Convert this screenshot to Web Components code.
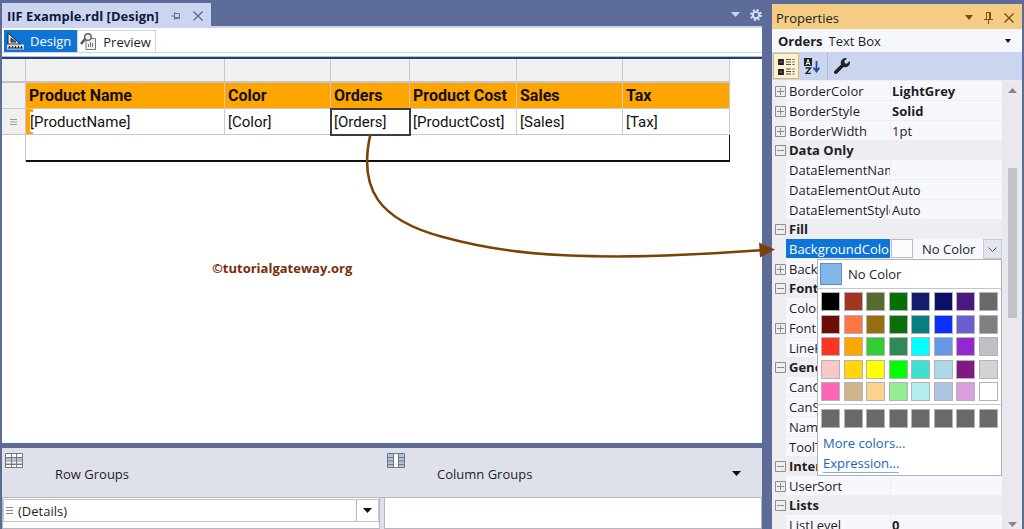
<!DOCTYPE html>
<html lang="en">
<head>
<meta charset="utf-8">
<title>IIF Example.rdl [Design]</title>
<style>
    body {
        margin: 0;
        background: #5d6b99;
        color: #1e1e1e;
        font: 13px/20px "Open Sans", "Noto Sans", sans-serif;
    }
</style>
</head>
<body>
<report-designer></report-designer>

<script>
/* Shared base: every element clones its own template into an open shadow root */
class BaseElement extends HTMLElement {
    constructor() {
        super();
        this.attachShadow({ mode: "open" });
    }

    reset() {
        return `
            * { box-sizing: border-box; }
            button, select { font: inherit; color: inherit; margin: 0; padding: 0; border: 0; background: none; }
            svg { display: block; flex: none; }
        `;
    }

    connectedCallback() {
        const template = document.createElement("template");
        template.innerHTML = `<style>${this.reset()}${this.getStyles()}</style>${this.getTemplate()}`;
        this.shadowRoot.appendChild(template.content.cloneNode(true));
    }
}

/* Document tab with its pin and close buttons */
class DocumentTabs extends BaseElement {
    getStyles() {
        return `
            :host { display: flex; justify-content: space-between; height: 26px; padding-top: 3px; }
            .tab { display: flex; align-items: center; gap: 12px; padding: 2px 8px 0 5px; background: #ccd5f0; color: #10183c; font-weight: 700; }
            .tools { display: flex; align-items: center; gap: 10px; }
        `;
    }

    getTemplate() {
        return `
            <div class="tab">
                <span>IIF Example.rdl [Design]</span>
                <button aria-label="Pin tab"><svg width="10" height="10" fill="none" stroke="#66749f"><path d="M0 5h3M3.500 1v8M3.500 2.500h5v5h-5M3.500 6.500h5"/></svg></button>
                <button aria-label="Close tab"><svg width="10" height="10" fill="none" stroke="#5a6894" stroke-width="1.300"><path d="M0.500 0.500l9 9M9.500 0.500l-9 9"/></svg></button>
            </div>
            <div class="tools">
                <button aria-label="Window list"><svg width="9" height="6" fill="#ccd5f0"><path d="M0 0h9L4.500 5z"/></svg></button>
                <button aria-label="Settings"><svg width="12" height="12" viewBox="0 0 12 12" fill="none" stroke="#d6def5"><circle cx="6" cy="6" r="3.200" stroke-width="2"/><circle cx="6" cy="6" r="5" stroke-width="2" stroke-dasharray="2 1.930"/></svg></button>
            </div>
        `;
    }
}

/* Design / Preview switch */
class ViewSwitch extends BaseElement {
    getStyles() {
        return `
            :host { display: flex; height: 27px; padding: 2px 2px 0; border-top: 2px solid #ccd5f0; border-bottom: 1px solid #ccd5f0; background: #fff; }
            button { display: flex; align-items: center; gap: 6px; height: 22px; padding: 0 6px 0 3px; }
            .active { background: #0f74d8; color: #fff; }
            .other { border: 1px solid #ccd5f0; border-bottom: 0; padding: 0 4px 0 2px; }
        `;
    }

    getTemplate() {
        return `
            <button class="active">
                <svg width="17" height="17" viewBox="0 0 17 17"><path d="M1 0v11h12z" fill="#e9e9e4" stroke="#222"/><path d="M4 5v4h5z" fill="#0f74d8" stroke="#333"/><path d="M0 11.500h17v5H0z" fill="#ddd9cc"/><path d="M1 15h15M2.500 13v2M5.500 13v2M8.500 13v2M11.500 13v2M14.500 13v2" stroke="#222"/></svg>
                <span>Design</span>
            </button>
            <button class="other">
                <svg width="17" height="17" viewBox="0 0 17 17" fill="none"><path d="M6 5.500h9.500v11H6z" fill="#f4f4f4" stroke="#777"/><path d="M8.500 14v-3M10.500 14V9M12.500 14v-4" stroke="#777"/><circle cx="8" cy="4" r="3.300" fill="#f4f4f4" stroke="#666" stroke-width="1.500"/><path d="M5 6L1 11" stroke="#555" stroke-width="2.500"/></svg>
                <span>Preview</span>
            </button>
        `;
    }
}

/* The table region being designed, with its row and column handles */
class ReportTablix extends BaseElement {
    getStyles() {
        return `
            :host { display: block; flex: 1; min-height: 0; overflow: hidden; background: #fff; padding-top: 3px; }
            .edge { border-top: 1px solid #b9bcc4; border-bottom: 2px solid #1c3f7d; }
            table { table-layout: fixed; width: 728px; border-collapse: separate; border-spacing: 0; color: #111; font: 15px/20px Roboto, sans-serif; }
            th, td { height: 26px; padding: 0 0 0 3px; border-right: 1px solid #c9c9c9; border-bottom: 1px solid #c9c9c9; text-align: left; white-space: nowrap; }
            .handles td { height: 24px; background: #f0f0f0; border-bottom: 2px solid #c3c3c8; }
            .handle { background: #f0f0f0; padding: 0; }
            .handle svg { margin: 0 auto; }
            th { background: #ffa500; font-size: 16px; font-weight: 700; }
            .first { padding: 0; background: linear-gradient(90deg, #ffa500 7px, #fff 7px); }
            .first span { display: inline-block; margin-left: 4px; background: #fff; }
            .selected { outline: 2px solid #3c3c3c; outline-offset: -1px; }
            .body td { height: 27px; border-right-color: #111; border-bottom: 2px solid #111; }
            .body .outside { border-right-color: #c9c9c9; border-bottom: 0; }
        `;
    }

    getTemplate() {
        return `
            <div class="edge"></div>
            <table>
                <colgroup><col width="24"><col width="199"><col width="106"><col width="79"><col width="107"><col width="106"><col width="107"></colgroup>
                <tr class="handles"><td></td><td></td><td></td><td></td><td></td><td></td><td></td></tr>
                <tr>
                    <td class="handle"></td>
                    <th>Product Name</th><th>Color</th><th>Orders</th><th>Product Cost</th><th>Sales</th><th>Tax</th>
                </tr>
                <tr>
                    <td class="handle"><svg width="7" height="6" stroke="#999"><path d="M0 0.500h7M0 3h7M0 5.500h7"/></svg></td>
                    <td class="first"><span>[ProductName]</span></td><td>[Color]</td><td class="selected">[Orders]</td><td>[ProductCost]</td><td>[Sales]</td><td>[Tax]</td>
                </tr>
                <tr class="body"><td class="outside"></td><td colspan="6"></td></tr>
            </table>
        `;
    }
}

/* Row Groups and Column Groups */
class GroupingPane extends BaseElement {
    getStyles() {
        return `
            :host { display: block; height: 81px; background: #dee1e9; }
            .columns { display: grid; grid-template-columns: 1fr 1fr; column-gap: 4px; }
            .head { height: 50px; border-bottom: 1px solid #b5b8c0; }
            .title { display: flex; align-items: flex-start; gap: 32px; padding: 5px 21px 0 3px; }
            .title span { flex: 1; padding-top: 11px; }
            .title button { padding-top: 18px; }
            .list { height: 31px; padding-top: 1px; background: #fff; border: 1px solid #b5b8c0; border-top: 0; }
            .group { display: flex; align-items: center; gap: 5px; height: 23px; padding-left: 2px; border: 1px solid #c3c6ce; }
            .group span { flex: 1; }
            .group button { align-self: stretch; display: grid; place-items: center; width: 22px; border-left: 1px solid #b5b8c0; }
        `;
    }

    getTemplate() {
        const caret = `<svg width="9" height="5"><path d="M0 0h9L4.500 5z" fill="#111"/></svg>`;
        return `
            <div class="columns head">
                <div class="title">
                    <svg width="18" height="15"><path d="M0.500 0.500h17v14h-17z" fill="#fff" stroke="#777"/><path d="M1 5h16v2H1zM1 10h16v2H1z" fill="#a9c4ea"/><path d="M6.500 0v15M11.500 0v15M0 4.500h18M0 8h18M0 11.500h18" stroke="#777"/></svg>
                    <span>Row Groups</span>
                </div>
                <div class="title">
                    <svg width="18" height="15"><path d="M0.500 0.500h17v14h-17z" fill="#a9c4ea" stroke="#777"/><path d="M0 4.500h18M0 8h18M0 11.500h18" stroke="#777"/><path d="M6.500 1h5v13h-5z" fill="#fff"/><path d="M6.500 0v15M11.500 0v15" stroke="#777"/></svg>
                    <span>Column Groups</span>
                    <button aria-label="Grouping options">${caret}</button>
                </div>
            </div>
            <div class="columns">
                <div class="list">
                    <div class="group">
                        <svg width="7" height="7" stroke="#888"><path d="M0 0.500h7M0 3.500h7M0 6.500h7"/></svg>
                        <span>(Details)</span>
                        <button aria-label="Details group menu">${caret}</button>
                    </div>
                </div>
                <div class="list"></div>
            </div>
        `;
    }
}

/* One line of the grid: name, value in the slot, optional expander, category style */
class PropertyRow extends BaseElement {
    getStyles() {
        return `
            :host { display: grid; grid-template-columns: 14px 104px minmax(0, 1fr); position: relative; height: 20px; line-height: 20px; }
            :host([category]) { height: 19px; line-height: 19px; font-weight: 700; }
            :host([strong]) .value { font-weight: 700; }
            button { display: grid; place-items: center start; padding-left: 3px; }
            .name, .value { overflow: hidden; white-space: nowrap; background: #f7f8fe; border-bottom: 1px solid #eeeef4; }
            .name { padding-left: 3px; }
            .value { padding-left: 1px; border-left: 1px solid #eeeef4; }
            :host([category]) .name, :host([category]) .value { background: none; border: 0; }
            :host([selected]) .name { background: #0f74d8; color: #fff; }
            :host([selected]) .value { padding: 0; border-bottom: 0; }
        `;
    }

    getTemplate() {
        const sign = this.getAttribute("sign");
        const icon = sign ? `
            <button aria-label="Toggle ${this.getAttribute("name")}">
                <svg width="11" height="11" fill="none" stroke="#8c8c92"><path d="M0.500 0.500h10v10h-10zM2 5.500h7${sign === "plus" ? "M5.500 2v7" : ""}"/></svg>
            </button>` : "<span></span>";
        return `
            ${icon}
            <div class="name">${this.getAttribute("name")}</div>
            <div class="value"><slot></slot></div>
            <slot name="popup"></slot>
        `;
    }
}

/* Swatch box, chosen colour and drop-down arrow */
class ColorField extends BaseElement {
    getStyles() {
        return `
            :host { display: flex; position: relative; height: 20px; }
            .swatch { width: 22px; height: 19px; border: 1px solid #b9bcc4; background: #fbfbfe; }
            select { flex: 1; appearance: none; padding-left: 9px; line-height: 20px; }
            .arrow { display: grid; place-items: center; width: 19px; background: #e3e5ec; border: 1px solid #c9ccd4; }
        `;
    }

    getTemplate() {
        return `
            <span class="swatch"></span>
            <select aria-label="BackgroundColor"><option>No Color</option></select>
            <span class="arrow"><svg width="9" height="5" fill="none" stroke="#555"><path d="M0.500 0.500l4 4 4-4"/></svg></span>
        `;
    }
}

/* Palette that drops down from the colour field */
class ColorPalette extends BaseElement {
    getStyles() {
        return `
            :host { display: block; position: absolute; z-index: 1; top: 100%; right: 0; width: 185px; height: 217px; background: #fff; border: 1px solid #b0b2b8; }
            .none { display: flex; align-items: center; gap: 6px; width: 100%; height: 29px; padding: 2px; border-bottom: 1px solid #c3c6ce; }
            .none i { width: 22px; height: 22px; background: #82b7e8; border: 1px solid #5a8fc8; }
            .grid { display: grid; grid-template-columns: repeat(8, 19px); justify-content: space-between; align-content: space-between; height: 115px; padding: 3px; }
            .grid button { height: 19px; border: 1px solid #b4b4b8; }
            .custom { height: 28px; border-top: 1px solid #c3c6ce; align-content: center; }
            .links { padding: 1px 5px; }
            a { display: block; color: #1a65b8; text-decoration: none; line-height: 20px; }
            a span { border-bottom: 1px solid #88aedb; display: inline-block; line-height: 17px; }
        `;
    }

    getTemplate() {
        const colors = `000000 a03820 556b2f 067006 141c70 0a1068 4b1880 696969
            6e0c08 ff7645 996e0e 0a700a 087e7e 0a32ff 6a60cc 808080
            ff3524 ffa500 32cd32 2e8b57 00ffff 6498e2 9328d0 c0c0c4
            f8c8c8 ffd60a ffff00 00ff00 3ee0d0 add8ea 801a80 d3d3d3
            ff65b4 d2b48c fdd48c 90ee90 b0eef0 b0c4e2 dc9edc ffffff`.split(/\s+/);
        const swatch = color => `<button aria-label="#${color}" style="background: #${color}"></button>`;
        return `
            <button class="none"><i></i><span>No Color</span></button>
            <div class="grid">${colors.map(swatch).join("")}</div>
            <div class="grid custom">${swatch("696969").repeat(8)}</div>
            <div class="links">
                <a href="#more">More colors...</a>
                <a href="#expression"><span>Expression...</span></a>
            </div>
        `;
    }
}

/* Properties tool window */
class PropertiesPanel extends BaseElement {
    getStyles() {
        return `
            :host { display: flex; flex-direction: column; min-height: 0; margin-top: 4px; background: #eeeef2; }
            .title { display: flex; align-items: center; gap: 11px; height: 25px; padding: 2px 8px 0 4px; background: #f5cc84; }
            .title span { flex: 1; }
            .object { display: flex; align-items: center; gap: 6px; height: 23px; padding: 0 11px 0 6px; background: #f5f7fd; text-align: left; }
            .object span { flex: 1; }
            .tools { display: flex; align-items: center; height: 28px; padding: 0 1px; background: #ccd5f0; }
            .tools button { display: grid; place-items: center; width: 26px; height: 26px; }
            .tools .on { background: #fdf1cd; border: 1px solid #d9b973; }
            .tools .wrench { margin-left: 2px; border-left: 1px dotted #9aa4c4; width: 28px; }
            .content { display: grid; grid-template-columns: minmax(0, 1fr) 20px; flex: 1; min-height: 0; padding-top: 1px; overflow: hidden; }
            .rows { min-height: 0; }
            .scroll { display: flex; flex-direction: column; align-items: center; justify-content: space-between; padding: 7px 0 2px; background: #e8e8ee; }
            .thumb { width: 9px; height: 150px; margin-bottom: 130px; background: #c2c3c9; }
        `;
    }

    getTemplate() {
        return `
            <div class="title">
                <span>Properties</span>
                <button aria-label="Window position"><svg width="8" height="5"><path d="M0 0h8L4 5z" fill="#7a4f08"/></svg></button>
                <button aria-label="Auto hide"><svg width="9" height="12" fill="none" stroke="#7a4f08"><path d="M2.500 7V0.500h4V7M5.500 0.500V7M0 7.500h9M4.500 8v4"/></svg></button>
                <button aria-label="Close"><svg width="10" height="10" fill="none" stroke="#7a4f08" stroke-width="1.400"><path d="M0.500 0.500l9 9M9.500 0.500l-9 9"/></svg></button>
            </div>
            <button class="object"><b>Orders</b><span>Text Box</span><svg width="6" height="4"><path d="M0 0h6L3 4z" fill="#111"/></svg></button>
            <div class="tools">
                <button class="on" aria-label="Categorized"><svg width="17" height="17" fill="none" stroke="#222"><path d="M1 2h4v4H1zM1 12h4v4H1z" stroke-width="1.800"/><path d="M3 2v4M1 4h4M3 12v4M1 14h4"/><path d="M8 1.500h5M8 4h5M8 6.500h5M8 11h5M8 13.500h5M8 16h5M14.500 1.500h2M14.500 4h2M14.500 6.500h2M14.500 11h2M14.500 13.500h2M14.500 16h2" stroke="#555"/></svg></button>
                <button aria-label="Alphabetical"><svg width="16" height="16" fill="none"><path d="M0 0h8v8H0z" fill="#222"/><path d="M2 7l2-5.500L6 7M3 5.500h2" stroke="#fff"/><path d="M1.500 10h5L2 15.500h5" stroke="#222" stroke-width="1.500"/><path d="M12.500 3v10M9.500 9.500l3 4 3-4" stroke="#1b4a9c" stroke-width="1.700"/></svg></button>
                <button class="wrench" aria-label="Property pages"><svg width="16" height="16" viewBox="0 0 16 16"><path d="M1.800 14.200L9.500 6.500" stroke="#222" stroke-width="3.600" stroke-linecap="round"/><path d="M13 0.400L10.300 3.100l0.500 2.100 2.100 0.500L15.600 3A4.600 4.600 0 1 1 13 0.400z" fill="#222"/></svg></button>
            </div>
            <div class="content">
                <div class="rows">
                    <property-row name="BorderColor" sign="plus" strong>LightGrey</property-row>
                    <property-row name="BorderStyle" sign="plus" strong>Solid</property-row>
                    <property-row name="BorderWidth" sign="plus">1pt</property-row>
                    <property-row name="Data Only" sign="minus" category></property-row>
                    <property-row name="DataElementNam"></property-row>
                    <property-row name="DataElementOut">Auto</property-row>
                    <property-row name="DataElementStyle">Auto</property-row>
                    <property-row name="Fill" sign="minus" category></property-row>
                    <property-row name="BackgroundColo" selected>
                        <color-field></color-field>
                        <color-palette slot="popup"></color-palette>
                    </property-row>
                    <property-row name="BackgroundImage" sign="plus"></property-row>
                    <property-row name="Font" sign="minus" category></property-row>
                    <property-row name="Color"></property-row>
                    <property-row name="Font" sign="plus"></property-row>
                    <property-row name="LineHeight"></property-row>
                    <property-row name="General" sign="minus" category></property-row>
                    <property-row name="CanGrow"></property-row>
                    <property-row name="CanShrink"></property-row>
                    <property-row name="Name"></property-row>
                    <property-row name="ToolTip"></property-row>
                    <property-row name="Interactivity" sign="minus" category></property-row>
                    <property-row name="UserSort" sign="plus"></property-row>
                    <property-row name="Lists" sign="minus" category></property-row>
                    <property-row name="ListLevel" strong>0</property-row>
                </div>
                <div class="scroll">
                    <svg width="9" height="5"><path d="M0 5h9L4.500 0z" fill="#85868c"/></svg>
                    <div class="thumb"></div>
                    <svg width="9" height="5"><path d="M0 0h9L4.500 5z" fill="#85868c"/></svg>
                </div>
            </div>
        `;
    }
}

/* Whole window, plus the annotation drawn over it */
class ReportDesigner extends BaseElement {
    getStyles() {
        return `
            :host { display: grid; grid-template-columns: minmax(0, 1fr) 250px; grid-template-rows: 100vh; column-gap: 10px; padding: 0 2px; position: relative; overflow: hidden; }
            main { display: flex; flex-direction: column; min-height: 0; }
            grouping-pane { margin-top: 5px; }
            .credit { position: absolute; left: 212px; top: 258px; color: #7a2d0a; font-weight: 700; }
            .arrow { position: absolute; left: 360px; top: 130px; z-index: 2; pointer-events: none; }
        `;
    }

    getTemplate() {
        return `
            <main>
                <document-tabs></document-tabs>
                <view-switch></view-switch>
                <report-tablix></report-tablix>
                <grouping-pane></grouping-pane>
            </main>
            <properties-panel></properties-panel>
            <span class="credit">©tutorialgateway.org</span>
            <svg class="arrow" width="420" height="135" fill="none"><path d="M10.500 4C-2 58 18 90 83 107C130 120 180 126.500 257 126.500C320 126 360 123 403 120" stroke="#7b4208" stroke-width="2.600"/><path d="M399 112.500L415 119.500L400 127.500z" fill="#7b4208"/></svg>
        `;
    }
}

customElements.define("document-tabs", DocumentTabs);
customElements.define("view-switch", ViewSwitch);
customElements.define("report-tablix", ReportTablix);
customElements.define("grouping-pane", GroupingPane);
customElements.define("property-row", PropertyRow);
customElements.define("color-field", ColorField);
customElements.define("color-palette", ColorPalette);
customElements.define("properties-panel", PropertiesPanel);
customElements.define("report-designer", ReportDesigner);
</script>
</body>
</html>
